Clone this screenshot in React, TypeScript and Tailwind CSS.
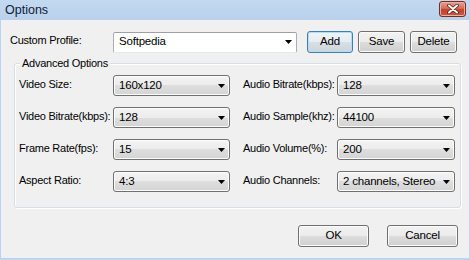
import React from 'react';

const font = { fontFamily: '"Liberation Sans", Arial, sans-serif' };

const Arrow: React.FC = () => (
  <svg width="7" height="4" viewBox="0 0 7 4" className="shrink-0">
    <path d="M0 0 H7 L3.5 4 Z" fill="#000" />
  </svg>
);

interface DropProps {
  value: string;
  width: string;
}

const Dropdown: React.FC<DropProps> = ({ value, width }) => (
  <div
    className={`${width} shrink-0 h-[21px] flex items-center justify-between pl-[5px] pr-[4px] border border-[#707070] rounded-[3px] bg-[linear-gradient(#f3f3f3_0%,#ececec_50%,#dedede_50%,#d4d4d4_100%)] shadow-[inset_0_0_0_1px_#fcfcfc]`}
  >
    <span className="text-[11.5px] tracking-[-0.2px] whitespace-nowrap text-black">{value}</span>
    <Arrow />
  </div>
);

interface BtnProps {
  label: string;
  width: string;
  focused?: boolean;
}

const Button: React.FC<BtnProps> = ({ label, width, focused }) => (
  <div
    className={`${width} h-[22px] flex items-center justify-center rounded-[3px] border text-[11.5px] tracking-[-0.2px] text-black ${
      focused
        ? 'border-[#3c7fb1] bg-[linear-gradient(#f0f4f8_0%,#e6ecf1_50%,#d8dfe5_50%,#cdd5db_100%)] shadow-[inset_0_0_0_1px_#b4dcf5]'
        : 'border-[#707070] bg-[linear-gradient(#f2f2f2_0%,#ebebeb_50%,#dddddd_50%,#cfcfcf_100%)] shadow-[inset_0_0_0_1px_#fbfbfb]'
    }`}
  >
    {label}
  </div>
);

const rows = [
  ['Video Size:', '160x120', 'Audio Bitrate(kbps):', '128'],
  ['Video Bitrate(kbps):', '128', 'Audio Sample(khz):', '44100'],
  ['Frame Rate(fps):', '15', 'Audio Volume(%):', '200'],
  ['Aspect Ratio:', '4:3', 'Audio Channels:', '2 channels, Stereo'],
];

const labelCls = 'w-[94px] shrink-0 whitespace-nowrap text-[11px] tracking-[-0.25px] -mt-[2px]';

export default function App() {
  return (
    <div
      className="w-[470px] h-[260px] flex flex-col bg-[#bcd4ee] pl-[1px] pr-[1px] pb-[2px]"
      style={font}
    >
      {/* Title bar */}
      <div className="h-[20px] flex items-start justify-between bg-[linear-gradient(#c3d9f1,#b9d1ea)] -mx-[1px]">
        <span className="pl-[5px] pt-[2px] text-[12.5px] leading-[16px] text-[#10203a]">Options</span>
        <div className="mt-[1px] mr-[4px] w-[27px] h-[16px] rounded-[3px] border border-[#7a2a20] bg-[linear-gradient(#e8a090_0%,#d46e5e_45%,#c0402d_55%,#c85a45_100%)] flex items-center justify-center shadow-[inset_0_0_0_1px_#eab0a4]">
          <svg width="12" height="10" viewBox="0 0 12 10">
            <path d="M2 1.5 L10 8.5 M10 1.5 L2 8.5" stroke="#5a2018" strokeWidth="3.6" strokeLinecap="round" />
            <path d="M2 1.5 L10 8.5 M10 1.5 L2 8.5" stroke="#fff" strokeWidth="2" strokeLinecap="round" />
          </svg>
        </div>
      </div>

      {/* Client area */}
      <div className="flex-1 bg-[#f0f0f0] flex flex-col pt-[11px] text-black">
        {/* Profile row */}
        <div className="flex items-center h-[22px] pl-[9px]">
          <span className="w-[103px] shrink-0 whitespace-nowrap text-[11px] tracking-[-0.25px] -mt-[3px]">Custom Profile:</span>
          <div className="w-[184px] h-[21px] flex items-center justify-between pl-[5px] pr-[4px] bg-white border border-[#abadb3] border-t-[#9da0a8] border-b-[#e3e9ef] rounded-[2px]">
            <span className="text-[11.5px] tracking-[-0.2px]">Softpedia</span>
            <Arrow />
          </div>
          <div className="ml-[10px]">
            <Button label="Add" width="w-[46px]" focused />
          </div>
          <div className="ml-[5px]">
            <Button label="Save" width="w-[47px]" />
          </div>
          <div className="ml-[5px]">
            <Button label="Delete" width="w-[47px]" />
          </div>
        </div>

        {/* Group box */}
        <div className="relative mt-[10px] ml-[13px] w-[447px] h-[145px] border border-[#d5dfe5] rounded-[3px] shadow-[inset_1px_1px_0_#fff,1px_1px_0_#fff] flex flex-col gap-[11px] pt-[11px] pl-[4px]">
          <span className="absolute -top-[8px] left-[5px] px-[2px] bg-[#f0f0f0] whitespace-nowrap text-[11px] leading-[14px] tracking-[-0.25px]">
            Advanced Options
          </span>
          {rows.map(([l1, v1, l2, v2]) => (
            <div key={l1} className="flex items-center">
              <span className={labelCls}>{l1}</span>
              <Dropdown value={v1} width="w-[117px]" />
              <span className={`ml-[13px] ${labelCls}`}>{l2}</span>
              <Dropdown value={v2} width="w-[118px]" />
            </div>
          ))}
        </div>

        {/* OK / Cancel */}
        <div className="flex justify-end gap-[18px] mt-[17px] pr-[11px]">
          <Button label="OK" width="w-[71px]" />
          <Button label="Cancel" width="w-[71px]" />
        </div>
      </div>
    </div>
  );
}
